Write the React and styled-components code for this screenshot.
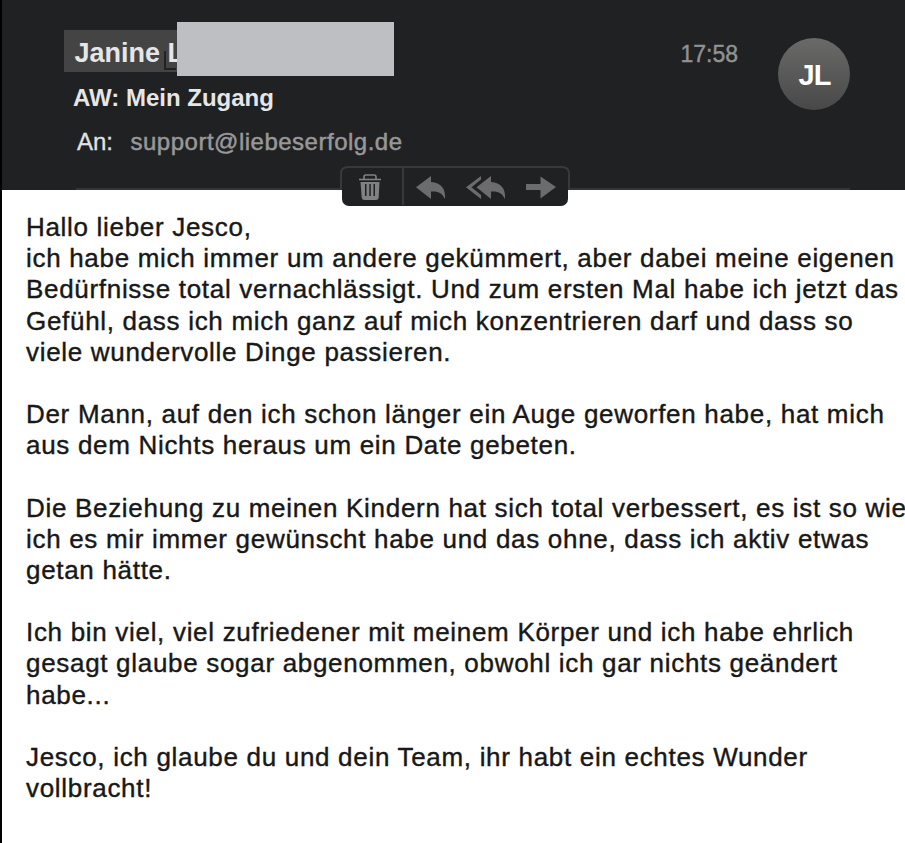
import React from "react";
import styled, { createGlobalStyle } from "styled-components";

const GlobalStyle = createGlobalStyle`
  * { box-sizing: border-box; }
  body { margin: 0; background: #fff; overflow: hidden; }
`;

const MailWindow = styled.main`
  width: 905px;
  height: 843px;
  overflow: hidden;
  border-left: 2px solid #000;
  background: #fff;
  font-family: "Liberation Sans", Arial, sans-serif;
`;

const Header = styled.header`
  position: relative;
  height: 190px;
  padding: 22px 55px 0 62px;
  display: flex;
  justify-content: space-between;
  background: #1f2123;
`;

const Divider = styled.div`
  position: absolute;
  left: 74px;
  right: 55px;
  bottom: 0;
  height: 2px;
  background: #353538;
`;

const Details = styled.div`
  display: flex;
  flex-direction: column;
`;

const SenderRow = styled.div`
  display: flex;
  height: 54px;
`;

const Sender = styled.div`
  position: relative;
  width: 113px;
  height: 42px;
  margin-top: 8px;
  padding-left: 10.5px;
  white-space: nowrap;
  background: #444;
  color: #e6e6e6;
  font-size: 27px;
  font-weight: 700;
  line-height: 46px;
`;

const CornerMark = styled.span`
  position: absolute;
  left: 100px;
  top: 21px;
  width: 12px;
  height: 19px;
  border-left: 2px solid #222;
  border-bottom: 2px solid #222;
`;

const Redaction = styled.div`
  position: relative;
  width: 217px;
  height: 54px;
  background: #bebfc3;
`;

const Subject = styled.h1`
  margin: 7px 0 0 9px;
  color: #e6e6e6;
  font-size: 24px;
  font-weight: 700;
  line-height: 30px;
  white-space: nowrap;
`;

const Recipient = styled.div`
  display: flex;
  margin: 14px 0 0 13px;
  line-height: 30px;
  font-size: 24px;
  white-space: nowrap;
`;

const Label = styled.span`
  width: 53.5px;
  color: #e2e2e2;
  -webkit-text-stroke: 0.3px currentColor;
`;

const Address = styled.span`
  color: #989898;
  letter-spacing: 0.5px;
  -webkit-text-stroke: 0.5px currentColor;
`;

const Meta = styled.div`
  display: flex;
  gap: 40px;
  padding-top: 16px;
`;

const Time = styled.time`
  color: #929292;
  font-size: 23px;
  line-height: 32px;
  -webkit-text-stroke: 0.4px currentColor;
`;

const Avatar = styled.div`
  width: 72px;
  height: 72px;
  border-radius: 50%;
  display: grid;
  place-items: center;
  padding: 3px 0 0 1px;
  color: #fff;
  background: linear-gradient(#6a6a69, #484848);
  font-size: 29px;
  font-weight: 700;
  letter-spacing: -1px;
`;

const Toolbar = styled.div`
  position: absolute;
  left: 338px;
  top: 166px;
  width: 232px;
  height: 40px;
`;

const Message = styled.article`
  padding: 22px 0 0 24px;
  color: #181818;
  font-size: 26px;
  line-height: 31.18px;
  letter-spacing: 0.69px;
  -webkit-text-stroke: 0.4px currentColor;
`;

const Line = styled.p`
  margin: 0;
  height: 31.18px;
  white-space: nowrap;
`;

const lines = [
  "Hallo lieber Jesco,",
  "ich habe mich immer um andere gekümmert, aber dabei meine eigenen",
  "Bedürfnisse total vernachlässigt. Und zum ersten Mal habe ich jetzt das",
  "Gefühl, dass ich mich ganz auf mich konzentrieren darf und dass so",
  "viele wundervolle Dinge passieren.",
  "",
  "Der Mann, auf den ich schon länger ein Auge geworfen habe, hat mich",
  "aus dem Nichts heraus um ein Date gebeten.",
  "",
  "Die Beziehung zu meinen Kindern hat sich total verbessert, es ist so wie",
  "ich es mir immer gewünscht habe und das ohne, dass ich aktiv etwas",
  "getan hätte.",
  "",
  "Ich bin viel, viel zufriedener mit meinem Körper und ich habe ehrlich",
  "gesagt glaube sogar abgenommen, obwohl ich gar nichts geändert",
  "habe...",
  "",
  "Jesco, ich glaube du und dein Team, ihr habt ein echtes Wunder",
  "vollbracht!",
];

function MailActions() {
  return (
    <Toolbar>
      <svg width="232" height="40" viewBox="0 0 232 40">
        <rect x="2" y="0" width="226" height="40" rx="7" fill="#1f2123" />
        <path d="M1 23V8Q1 1 8 1H222Q229 1 229 8V23M63 2V39" fill="none" stroke="#38393b" strokeWidth="2" />
        <g fill="none" stroke="#818183" strokeWidth="1.6">
          <path d="M19 13.5H41" />
          <path d="M24 13V11Q24 9 26 9H34Q36 9 36 11V13" />
        </g>
        <path fillRule="evenodd" fill="#818183" d="M20.5 16H39.5L38.7 31.5Q38.5 34 36 34H24.5Q22 34 21.7 31.5ZM25 18V30H26.5V18ZM29.3 18V30H30.8V18ZM33.5 18V30H35V18Z" />
        <g fill="#6c6c6f">
          <path d="M76 21.3L91 10V16C101 16.500 106 23 105 33C102 27 98.500 25 91 25.500V33Z" />
          <path d="M136.500 21.3L151 10V16C161 16.500 166 23 165 33C162 27 158.500 25 151 25.500V33Z" />
          <path d="M126 21.300L141 10V13.500L131.500 21.300L141 29V33Z" />
          <path d="M186 18H200.500V10.500L216 21L200.500 32.500V24H186Z" />
        </g>
      </svg>
    </Toolbar>
  );
}

export default function App() {
  return (
    <>
      <GlobalStyle />
      <MailWindow>
        <Header>
          <Details>
            <SenderRow>
              <Sender>
                <CornerMark />
                Janine L
              </Sender>
              <Redaction />
            </SenderRow>
            <Subject>AW: Mein Zugang</Subject>
            <Recipient>
              <Label>An:</Label>
              <Address>support@liebeserfolg.de</Address>
            </Recipient>
          </Details>
          <Meta>
            <Time>17:58</Time>
            <Avatar>JL</Avatar>
          </Meta>
          <Divider />
          <MailActions />
        </Header>
        <Message>
          {lines.map((text, i) => (
            <Line key={i}>{text}</Line>
          ))}
        </Message>
      </MailWindow>
    </>
  );
}
